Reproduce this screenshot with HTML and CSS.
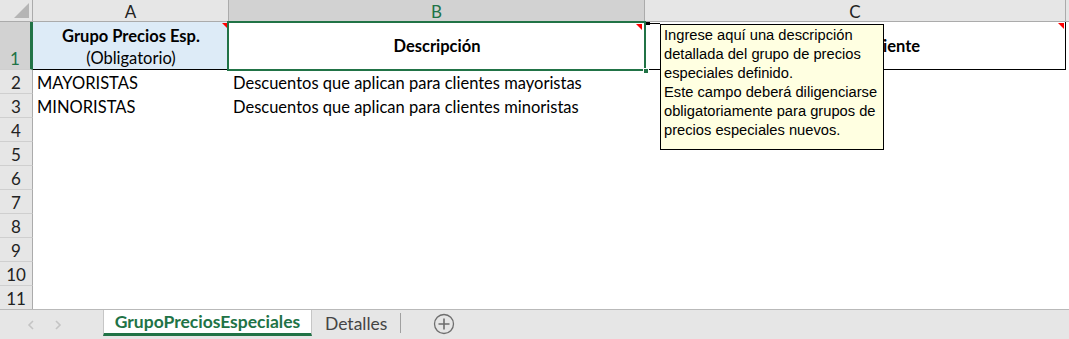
FILE: index.html
```html
<!DOCTYPE html>
<html lang="es">
<head>
<meta charset="utf-8">
<title>GrupoPreciosEspeciales</title>
<link rel="stylesheet" href="styles.css">
</head>
<body>
<div class="app">
  <div class="sheet">
    <div class="corner"><span class="corner-tri"></span></div>
    <div class="colhead">A</div>
    <div class="colhead sel">B</div>
    <div class="colhead">C</div>
    <div class="colhead end"></div>

    <div class="rowhead r1 sel">1</div>
    <div class="cell a1">
      <span class="ind"></span>
      <b>Grupo Precios Esp.</b>
      <span>(Obligatorio)</span>
    </div>
    <div class="cell b1">
      <span class="ind"></span>
      <b>Descripción</b>
      <span class="handle"></span>
    </div>
    <div class="cell c1">
      <span class="ind"></span>
      <b class="c1text">Aplica por Cliente</b>
    </div>
    <div class="cell blank"></div>

    <div class="rowhead">2</div>
    <div class="cell">MAYORISTAS</div>
    <div class="cell">Descuentos que aplican para clientes mayoristas</div>
    <div class="cell"></div>
    <div class="cell blank"></div>

    <div class="rowhead">3</div>
    <div class="cell">MINORISTAS</div>
    <div class="cell">Descuentos que aplican para clientes minoristas</div>
    <div class="cell"></div>
    <div class="cell blank"></div>

    <div class="rowhead">4</div><div class="cell"></div><div class="cell"></div><div class="cell"></div><div class="cell blank"></div>
    <div class="rowhead">5</div><div class="cell"></div><div class="cell"></div><div class="cell"></div><div class="cell blank"></div>
    <div class="rowhead">6</div><div class="cell"></div><div class="cell"></div><div class="cell"></div><div class="cell blank"></div>
    <div class="rowhead">7</div><div class="cell"></div><div class="cell"></div><div class="cell"></div><div class="cell blank"></div>
    <div class="rowhead">8</div><div class="cell"></div><div class="cell"></div><div class="cell"></div><div class="cell blank"></div>
    <div class="rowhead">9</div><div class="cell"></div><div class="cell"></div><div class="cell"></div><div class="cell blank"></div>
    <div class="rowhead">10</div><div class="cell"></div><div class="cell"></div><div class="cell"></div><div class="cell blank"></div>
    <div class="rowhead last">11</div><div class="cell"></div><div class="cell"></div><div class="cell"></div><div class="cell blank"></div>

    <span class="connector"></span>
    <div class="comment">Ingrese aquí una descripción detallada del grupo de precios especiales definido.<br>Este campo deberá diligenciarse obligatoriamente para grupos de precios especiales nuevos.</div>
  </div>

  <div class="tabbar">
    <div class="nav">
      <svg width="8" height="10" viewBox="0 0 8 10"><path d="M6 1 L2 5 L6 9" fill="none" stroke="#c4c4c4" stroke-width="1.6"/></svg>
      <svg width="8" height="10" viewBox="0 0 8 10"><path d="M2 1 L6 5 L2 9" fill="none" stroke="#c4c4c4" stroke-width="1.6"/></svg>
    </div>
    <div class="tab active">GrupoPreciosEspeciales</div>
    <div class="tab">Detalles</div>
    <span class="tabsep"></span>
    <div class="add">
      <svg width="22" height="22" viewBox="0 0 22 22"><circle cx="11" cy="11" r="9.5" fill="none" stroke="#6e6e6e" stroke-width="1.3"/><path d="M11 5.5 V16.5 M5.5 11 H16.5" stroke="#6e6e6e" stroke-width="1.6"/></svg>
    </div>
  </div>
</div>
</body>
</html>
```

FILE: styles.css
```css
* { box-sizing: border-box; }
html, body { margin: 0; padding: 0; background: #ffffff; }
body { font-family: "Lato", "Liberation Sans", sans-serif; color: #000; }

.app { width: 1069px; height: 339px; overflow: hidden; }

.sheet {
  position: relative;
  display: grid;
  grid-template-columns: 33px 196px 416px 421px 3px;
  grid-template-rows: 22px 48px repeat(9, 24px) 23px;
  height: 309px;
  font-size: 16.5px;
}

.corner {
  position: relative;
  background: #e6e6e6;
  border-right: 1px solid #ababab;
  border-bottom: 1px solid #ababab;
}
.corner-tri {
  position: absolute;
  right: 3px;
  bottom: 3px;
  width: 0; height: 0;
  border-left: 15px solid transparent;
  border-bottom: 15px solid #b5b5b5;
}

.colhead {
  background: #e6e6e6;
  border-right: 1px solid #ababab;
  border-bottom: 1px solid #ababab;
  display: flex;
  align-items: center;
  justify-content: center;
  font-size: 17px;
  color: #222;
  padding-top: 1px;
}
.colhead.sel { background: #d2d2d2; color: #217346; }
.colhead.end { border-right: none; }

.rowhead {
  background: #e6e6e6;
  border-right: 1px solid #ababab;
  border-bottom: 1px solid #cfcfcf;
  display: flex;
  align-items: flex-end;
  justify-content: center;
  font-size: 17px;
  color: #222;
  padding-bottom: 0;
}
.rowhead.sel {
  background: #d2d2d2;
  color: #217346;
  border-right: 3px solid #217346;
}
.rowhead.last { border-bottom: none; }

.cell {
  position: relative;
  display: flex;
  align-items: center;
  padding: 1px 4px 0 4px;
  white-space: nowrap;
}
.cell.blank { background: #ffffff; }

.a1 {
  background: #ddebf7;
  flex-direction: column;
  justify-content: flex-end;
  align-items: center;
  padding: 0;
  line-height: 22px;
  border-bottom: 1px solid #000;
}
.b1 {
  justify-content: center;
  border-bottom: 1px solid #000;
}
.c1 {
  justify-content: center;
  border-right: 1px solid #000;
  border-bottom: 1px solid #000;
}

.ind {
  position: absolute;
  top: 1px;
  right: 1px;
  width: 0; height: 0;
  border-left: 6px solid transparent;
  border-top: 6px solid #ff0000;
}
.b1 .ind { right: 3px; top: 2px; }

.b1::after {
  content: "";
  position: absolute;
  left: -2px; top: -1px; right: -1px; bottom: -2px;
  border: 2px solid #217346;
  pointer-events: none;
}
.handle {
  position: absolute;
  right: -4px;
  bottom: -5px;
  width: 6px;
  height: 6px;
  background: #217346;
  border: 1px solid #fff;
  z-index: 2;
}

.connector {
  position: absolute;
  left: 646px;
  top: 23px;
  width: 14px;
  height: 1px;
  background: #000;
}
.connector::before {
  content: "";
  position: absolute;
  left: 0; top: -1px;
  width: 4px; height: 3px;
  background: #000;
}

.comment {
  position: absolute;
  left: 660px;
  top: 24px;
  width: 224px;
  height: 126px;
  background: #ffffe1;
  border: 1px solid #000;
  padding: 1px 3px 0 3px;
  font-family: "Liberation Sans", "DejaVu Sans", sans-serif;
  font-size: 14.7px;
  line-height: 19px;
  color: #000;
  z-index: 3;
}

.tabbar {
  height: 30px;
  background: #e6e6e6;
  border-top: 1px solid #b9b9b9;
  display: flex;
  align-items: stretch;
  font-size: 17.5px;
}
.nav {
  width: 103px;
  display: flex;
  align-items: center;
  gap: 19px;
  padding-left: 27px;
}
.tab {
  display: flex;
  align-items: center;
  padding: 0 13px 2px 13px;
  color: #444;
}
.tab.active {
  background: #ffffff;
  color: #217346;
  font-weight: bold;
  width: 209px;
  justify-content: center;
  border-left: 1px solid #c6c6c6;
  border-right: 1px solid #c6c6c6;
  border-bottom: 3px solid #217346;
  margin-bottom: 3px;
  padding: 0;
}
.tabsep {
  width: 1px;
  background: #a0a0a0;
  margin: 3px 0 6px 0;
}
.add {
  display: flex;
  align-items: center;
  padding-left: 32px;
  padding-bottom: 2px;
}
```
